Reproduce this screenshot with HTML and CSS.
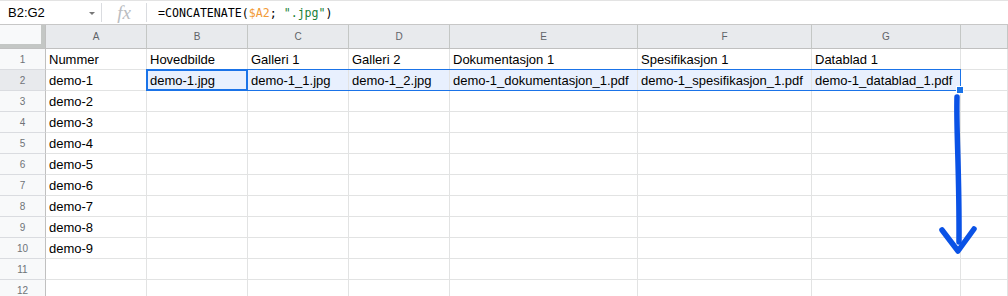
FILE: index.html
```html
<!DOCTYPE html>
<html lang="no">
<head>
<meta charset="utf-8">
<title>Ark</title>
<link rel="stylesheet" href="styles.css">
</head>
<body>
<div class="fbar">
  <div class="namebox"><span>B2:G2</span><span class="caret"></span></div>
  <div class="sep"></div>
  <div class="fx">fx</div>
  <div class="sep"></div>
  <div class="formula">=CONCATENATE(<span class="ref">$A2</span>; <span class="str">".jpg"</span>)</div>
</div>
<div class="sheet">
  <div class="corner"></div><div class="ch">A</div><div class="ch">B</div><div class="ch">C</div><div class="ch">D</div><div class="ch">E</div><div class="ch">F</div><div class="ch">G</div><div class="ch"></div>

  <div class="rh">1</div><div class="c">Nummer</div><div class="c">Hovedbilde</div><div class="c">Galleri 1</div><div class="c">Galleri 2</div><div class="c">Dokumentasjon 1</div><div class="c">Spesifikasjon 1</div><div class="c">Datablad 1</div><div class="c"></div>

  <div class="rh rh-sel">2</div><div class="c">demo-1</div><div class="c in">demo-1.jpg</div><div class="c in">demo-1_1.jpg</div><div class="c in">demo-1_2.jpg</div><div class="c in">demo-1_dokumentasjon_1.pdf</div><div class="c in">demo-1_spesifikasjon_1.pdf</div><div class="c in">demo-1_datablad_1.pdf</div><div class="c"></div>

  <div class="rh">3</div><div class="c">demo-2</div><div class="c"></div><div class="c"></div><div class="c"></div><div class="c"></div><div class="c"></div><div class="c"></div><div class="c"></div>
  <div class="rh">4</div><div class="c">demo-3</div><div class="c"></div><div class="c"></div><div class="c"></div><div class="c"></div><div class="c"></div><div class="c"></div><div class="c"></div>
  <div class="rh">5</div><div class="c">demo-4</div><div class="c"></div><div class="c"></div><div class="c"></div><div class="c"></div><div class="c"></div><div class="c"></div><div class="c"></div>
  <div class="rh">6</div><div class="c">demo-5</div><div class="c"></div><div class="c"></div><div class="c"></div><div class="c"></div><div class="c"></div><div class="c"></div><div class="c"></div>
  <div class="rh">7</div><div class="c">demo-6</div><div class="c"></div><div class="c"></div><div class="c"></div><div class="c"></div><div class="c"></div><div class="c"></div><div class="c"></div>
  <div class="rh">8</div><div class="c">demo-7</div><div class="c"></div><div class="c"></div><div class="c"></div><div class="c"></div><div class="c"></div><div class="c"></div><div class="c"></div>
  <div class="rh">9</div><div class="c">demo-8</div><div class="c"></div><div class="c"></div><div class="c"></div><div class="c"></div><div class="c"></div><div class="c"></div><div class="c"></div>
  <div class="rh">10</div><div class="c">demo-9</div><div class="c"></div><div class="c"></div><div class="c"></div><div class="c"></div><div class="c"></div><div class="c"></div><div class="c"></div>
  <div class="rh">11</div><div class="c"></div><div class="c"></div><div class="c"></div><div class="c"></div><div class="c"></div><div class="c"></div><div class="c"></div><div class="c"></div>
  <div class="rh">12</div><div class="c"></div><div class="c"></div><div class="c"></div><div class="c"></div><div class="c"></div><div class="c"></div><div class="c"></div><div class="c"></div>

  <div class="range"></div>
  <div class="active"></div>
  <div class="handle"></div>
</div>
<svg class="arrow" width="1008" height="296" viewBox="0 0 1008 296" aria-hidden="true">
  <path d="M957 97 C 956 130, 959.5 170, 959 242" />
  <path d="M942 230 L958 251 L974 229" />
</svg>
</body>
</html>
```
FILE: styles.css
```css
html, body {
  margin: 0;
  padding: 0;
  background: #fff;
  overflow: hidden;
}
body {
  width: 1008px;
  height: 296px;
  position: relative;
  font-family: "Liberation Sans", Arial, sans-serif;
  color: #000;
}

/* formula bar */
.fbar {
  display: flex;
  align-items: center;
  height: 23px;
  border-top: 1px solid #e3e3e3;
  border-bottom: 1px solid #c7c7c7;
  box-sizing: content-box;
}
.namebox {
  width: 101px;
  box-sizing: border-box;
  padding: 0 6px 0 8px;
  display: flex;
  align-items: center;
  justify-content: space-between;
  font-size: 13px;
  color: #000;
}
.caret {
  width: 0;
  height: 0;
  border-left: 3px solid transparent;
  border-right: 3px solid transparent;
  border-top: 3px solid #777;
  margin-top: 1px;
}
.sep {
  width: 1px;
  height: 19px;
  background: #dadce0;
}
.fx {
  width: 44px;
  text-align: center;
  font-family: "Liberation Serif", serif;
  font-style: italic;
  font-size: 19px;
  line-height: 20px;
  color: #babdc1;
}
.formula {
  padding-left: 11px;
  font-family: "DejaVu Sans Mono", monospace;
  font-size: 11.6px;
  color: #000;
}
.ref { color: #f29b38; }
.str { color: #188038; }

/* grid */
.sheet {
  position: relative;
  display: grid;
  grid-template-columns: 46px 101px 101px 101px 101px 188px 174px 149px 1fr;
  grid-template-rows: 24px repeat(12, 21px);
}
.sheet > div {
  box-sizing: border-box;
}
.corner {
  background: #f8f9fa;
  border-right: 1px solid #c0c0c0;
  border-bottom: 1px solid #c0c0c0;
  box-shadow: inset -4px -4px 0 #c4c7c5;
}
.ch {
  background: #e8eaed;
  border-right: 1px solid #c4c7c5;
  border-bottom: 1px solid #c0c0c0;
  display: flex;
  align-items: center;
  justify-content: center;
  font-size: 10px;
  color: #5f6368;
}
.rh {
  background: #f8f9fa;
  border-right: 1px solid #c0c0c0;
  border-bottom: 1px solid #dadce0;
  display: flex;
  align-items: center;
  justify-content: center;
  font-size: 10px;
  color: #6f7378;
}
.rh-sel {
  background: #e8eaed;
}
.c {
  border-right: 1px solid #e2e3e3;
  border-bottom: 1px solid #e2e3e3;
  display: flex;
  align-items: flex-end;
  padding: 0 3px 1px;
  font-size: 13px;
  line-height: 16px;
  white-space: nowrap;
  overflow: hidden;
}
.c.in {
  background: #e8f0fe;
}

/* selection overlay */
.range {
  position: absolute;
  left: 146px;
  top: 44px;
  width: 815px;
  height: 22px;
  border: 1px solid #1a73e8;
  box-sizing: border-box;
  pointer-events: none;
}
.active {
  position: absolute;
  left: 146px;
  top: 44px;
  width: 102px;
  height: 22px;
  border: 2px solid #1a73e8;
  box-sizing: border-box;
  pointer-events: none;
}
.handle {
  position: absolute;
  left: 956px;
  top: 61px;
  width: 8px;
  height: 8px;
  background: #1a73e8;
  border: 1px solid #fff;
  box-sizing: border-box;
}

/* drawn arrow */
.arrow {
  position: absolute;
  left: 0;
  top: 0;
  pointer-events: none;
}
.arrow path {
  fill: none;
  stroke: #0a52e6;
  stroke-width: 5.5;
  stroke-linecap: round;
  stroke-linejoin: round;
}
```
